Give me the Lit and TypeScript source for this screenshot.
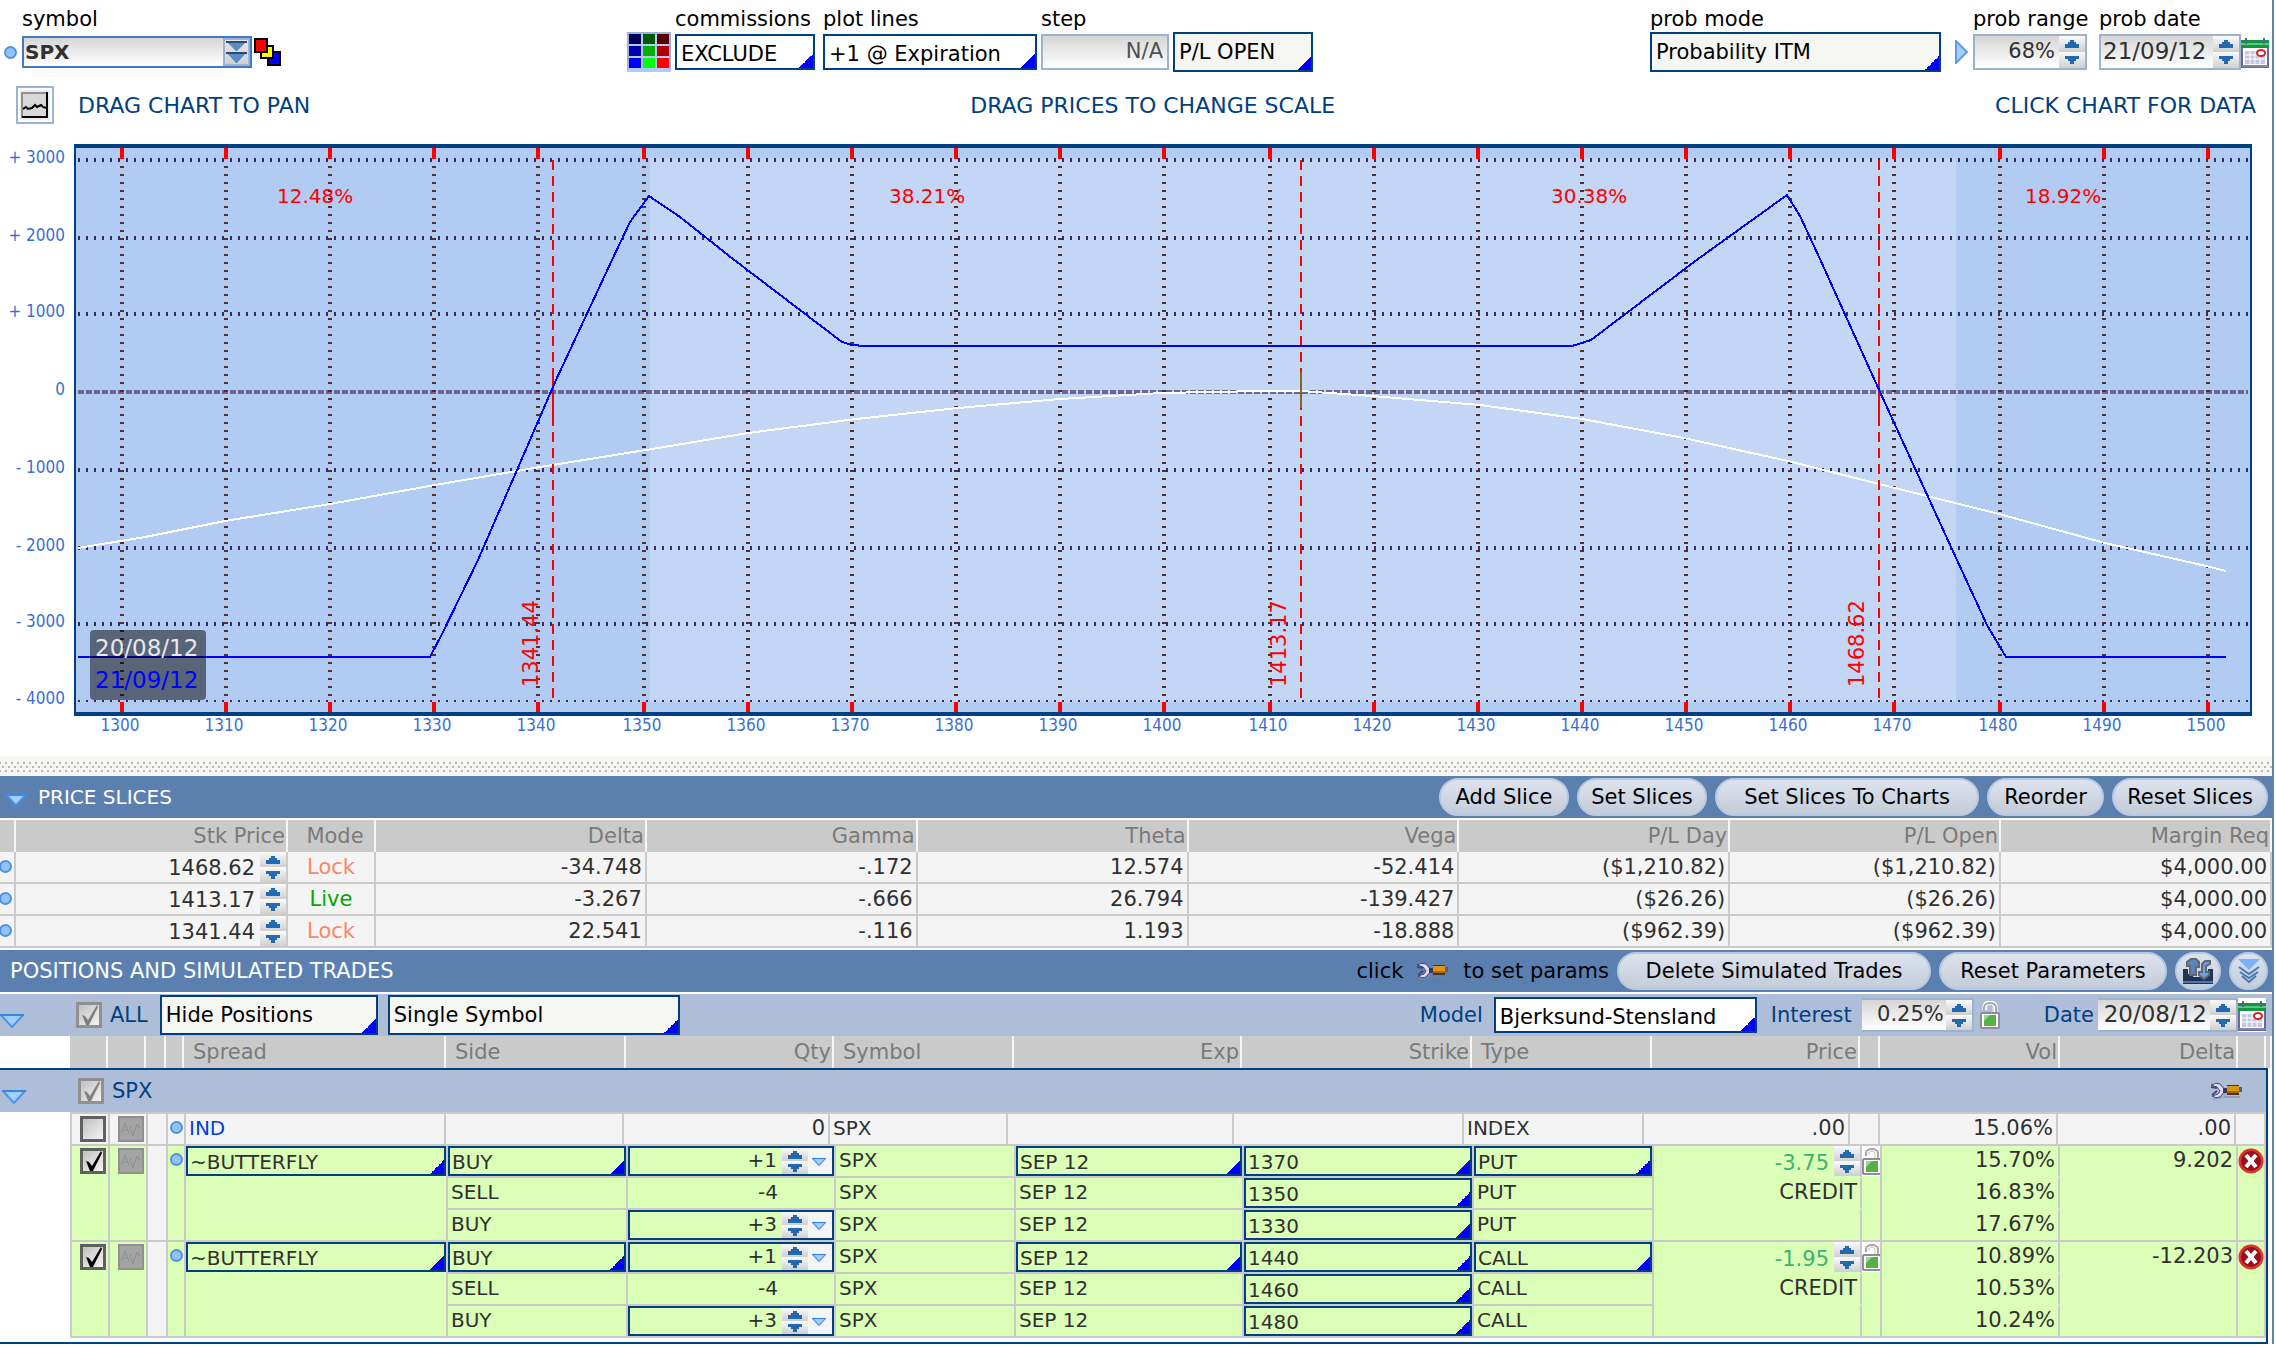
import { LitElement, html, svg, css, nothing } from "lit";
import { customElement } from "lit/decorators.js";

/* ---------- shared styles ---------- */

const shared = css`
  * {
    box-sizing: border-box;
  }
  button,
  input,
  select {
    font: inherit;
    color: inherit;
    margin: 0;
    padding: 0;
    border: 0;
    border-radius: 0;
    background: none;
    appearance: none;
    outline: none;
  }
  svg {
    display: block;
  }
  .pick {
    display: block;
    width: 100%;
    height: 100%;
    padding: 0 16px 0 4px;
    border: 2px solid #004080;
    background: linear-gradient(135deg, transparent 50%, #0000ff 50%) right bottom / 14px 14px no-repeat;
  }
  .spin {
    display: flex;
    flex: none;
    flex-direction: column;
    width: 26px;
    height: 100%;
  }
  .spin button {
    display: flex;
    flex: 1;
    align-items: center;
    justify-content: center;
    background: linear-gradient(#fafafa, #cfcfcf);
  }
  .bead {
    display: block;
    width: 13px;
    height: 13px;
    border: 2px solid #4f93e0;
    border-radius: 50%;
    background: #94c2fb;
  }
`;

/* ---------- icons ---------- */

const spinner = (what: string) => html`<span class="spin">
  <button aria-label="Increase ${what}">
    <svg width="14" height="8" viewBox="0 0 14 8"><path d="M5 0h4v2h2v2h3v4H0V4h3V2h2z" fill="#2468b0" /></svg>
  </button>
  <button aria-label="Decrease ${what}">
    <svg width="14" height="8" viewBox="0 0 14 8"><path d="M0 0h14v3h-3v2H9v3H5V5H3V3H0z" fill="#2468b0" /></svg>
  </button>
</span>`;

const downArrow = (w: number, h: number) => html`<svg width=${w} height=${h} viewBox="0 0 24 14">
  <path d="M1 1h22L12 13z" fill="#9fd0ff" stroke="#4f93e8" stroke-width="2" />
  <path d="M0 1h24" stroke="#3a86e0" stroke-width="2" />
</svg>`;

const calendar = html`<svg width="28" height="34" viewBox="0 0 28 34">
  <rect width="28" height="34" fill="#fff" />
  <path d="M1 10v22h26V10" fill="none" stroke="#68689c" stroke-width="2" />
  <path d="M1 31h26" stroke="#8484b0" stroke-width="2" />
  <rect y="5" width="28" height="8" fill="#109840" />
  <rect y="8" width="28" height="2" fill="#5cc880" />
  <path d="M5 3v6M23 3v6" stroke="#5c5c9c" stroke-width="2" />
  <rect x="4" y="16" width="20" height="13" fill="#c4c8e0" />
  <path d="M4 20h20M4 24h20M9 16v13M14 16v13M19 16v13" stroke="#fff" />
  <ellipse cx="20" cy="18" rx="4" ry="3" fill="#fff" stroke="#d82020" stroke-width="2" />
</svg>`;

const padlock = html`<svg width="20" height="28" viewBox="0 0 20 28">
  <path d="M5 9V5q1-3 5-3t5 3v7" fill="none" stroke="#fff" stroke-width="5" />
  <path d="M4 9V6q1-4 6-4t6 4v7" fill="none" stroke="#a8a8a8" stroke-width="2" />
  <path d="M7 8V6q1-2 3-2t3 2v7" fill="none" stroke="#c0c0c0" />
  <rect x="1" y="12" width="18" height="15" rx="1" fill="#fff" stroke="#8c8c9c" stroke-width="2" />
  <rect x="4" y="14" width="12" height="11" fill="#58b048" />
  <path d="M4 14h6l-6 6z" fill="#9cd890" />
</svg>`;

const wrench = html`<svg width="34" height="20" viewBox="0 0 34 20">
  <path d="M2 5q6-3 10 0l3 4v4l-4 4-8 1" fill="none" stroke="#8890b0" stroke-width="2" opacity="0.5" />
  <path d="M1 4q5-3 9-1l4 5v3l-4 5q-4 2-8-1l6-2 2-3-3-4z" fill="#dcdcf4" stroke="#484878" stroke-width="1" />
  <path d="M1 6l6 1M7 10l-5 4" stroke="#484878" stroke-width="2" />
  <rect x="13" y="7" width="5" height="5" fill="#38385c" />
  <rect x="17" y="4" width="12" height="10" fill="#40342c" />
  <rect x="17" y="5" width="12" height="5" fill="#e09410" />
  <rect x="17" y="10" width="12" height="2" fill="#a86808" />
  <path d="M29 6h3v5h-3z" fill="#605c6c" />
  <path d="M14 16h16" stroke="#788098" stroke-width="2" opacity="0.5" />
</svg>`;

const stacked = html`<svg width="28" height="28" viewBox="0 0 28 28">
  <path d="M14 14h12v13H14z" fill="#00f" stroke="#000" stroke-width="2" />
  <path d="M7 8h12v12H7z" fill="#ff0" stroke="#000" stroke-width="2" />
  <path d="M1 1h12v13H1z" fill="#f00" stroke="#000" stroke-width="2" />
</svg>`;

const swatches = [
  ["#000058", "#005800", "#580000"],
  ["#0000b0", "#00b000", "#b00000"],
  ["#0000ff", "#00ff00", "#ff0000"],
];

const palette = html`<svg width="44" height="40" viewBox="0 0 44 40">
  <rect width="44" height="40" fill="#b1cbf3" />
  <path d="M1 37V1h42v36" fill="none" stroke="#9ab3d6" stroke-width="2" />
  ${swatches.map((row, r) =>
    row.map((c, i) => svg`<rect x=${2 + i * 14} y=${2 + r * 12} width="12" height="10" fill=${c} />`)
  )}
</svg>`;

const cancel = html`<svg width="26" height="26" viewBox="0 0 26 26">
  <ellipse cx="13" cy="13" rx="12.5" ry="12.5" fill="#e03030" />
  <ellipse cx="13" cy="13" rx="10" ry="10" fill="#981018" />
  <path d="M8 7l10 12M18 7L8 19" stroke="#fff" stroke-width="4" />
</svg>`;

/* ---------- payoff chart ---------- */

const TICKS = [122, 226, 330, 434, 538, 644, 748, 852, 956, 1060, 1164, 1270, 1374, 1478, 1582, 1686, 1790, 1894, 2000, 2104, 2208];
const LEVELS: [string, number][] = [
  ["+ 3000", 160], ["+ 2000", 238], ["+ 1000", 314], ["0", 392], ["- 1000", 470], ["- 2000", 548], ["- 3000", 624], ["- 4000", 701],
];
const MARKS: [string, number][] = [["1341.44", 553], ["1413.17", 1301], ["1468.62", 1879]];
const ODDS: [string, number][] = [["12.48%", 277], ["38.21%", 889], ["30.38%", 1551], ["18.92%", 2025]];
const EXPIRY =
  "78,657 430,657 442,634 478,560 556,380 612,260 630,222 649,196 680,217 733,259 842,342 852,345 865,346 1572,346 1591,340 1698,259 1787,195 1800,216 1820,259 1880,392 1957,560 1987,625 2006,657 2226,657";
const TODAY =
  "78,548 145,537 225,521 330,504 435,485 540,467 646,450 748,433 856,419 958,408 1060,399 1161,393 1263,391 1301,391 1372,396 1480,405 1582,419 1684,438 1788,461 1887,486 1999,514 2105,543 2206,566 2226,571";

@customElement("payoff-chart")
export class PayoffChart extends LitElement {
  static styles = css`
    :host {
      display: block;
    }
    svg {
      display: block;
      width: 100%;
      height: auto;
    }
    .axis {
      font: 17px "DejaVu Sans Condensed", "DejaVu Sans", sans-serif;
      fill: #3a6fd0;
    }
    .odds {
      font: 20px "DejaVu Sans", sans-serif;
      fill: #f00;
    }
    .price {
      font: 21px "DejaVu Sans", sans-serif;
      fill: #f00;
    }
    .legend {
      font: 23px "DejaVu Sans", sans-serif;
    }
    .curve {
      fill: none;
      stroke-width: 2;
      shape-rendering: crispEdges;
    }
  `;

  render() {
    return html`<svg viewBox="0 138 2272 602" role="img" aria-label="Profit and loss by price">
      <rect x="74" y="144" width="2178" height="572" fill="#004080" />
      <rect x="76" y="148" width="2174" height="564" fill="#b1cbf3" />
      <rect x="650" y="158" width="1306" height="544" fill="#c4d6f6" />
      ${LEVELS.map(([, y]) =>
        y === 392
          ? svg`<path d="M78 392H2248" stroke="#6d6494" stroke-width="4" stroke-dasharray="6 2" />`
          : svg`<path d="M78 ${y}H2248" stroke="#342c60" stroke-width=${y === 701 ? 2 : 4} stroke-dasharray="2 6" />`
      )}
      ${TICKS.map(
        (x) => svg`<path d="M${x} 166V700" stroke="#503028" stroke-width="4" stroke-dasharray="2 6" />
          <path d="M${x} 148v11M${x} 702v10" stroke="#f00" stroke-width="4" />`
      )}
      <polyline class="curve" points=${TODAY} stroke="#fff" />
      ${MARKS.map(
        ([label, x]) => svg`<path d="M${x} 160V698" stroke="#f00" stroke-width="2" stroke-dasharray="10 6" />
          ${x === 1301
            ? svg`<path d="M1301 372V408" stroke="#806820" stroke-width="2" />`
            : svg`<path d="M${x} 368V425" stroke="#f00" stroke-width="2" />`}
          <text class="price" transform="translate(${x - 15} 687) rotate(-90)">${label}</text>`
      )}
      <polyline class="curve" points=${EXPIRY} stroke="#00f" />
      ${ODDS.map(([label, x]) => svg`<text class="odds" x=${x} y="203">${label}</text>`)}
      ${LEVELS.map(([label, y]) => svg`<text class="axis" x="65" y=${y + 3} text-anchor="end">${label}</text>`)}
      ${TICKS.map((x, i) => svg`<text class="axis" x=${x - 2} y="731" text-anchor="middle">${1300 + i * 10}</text>`)}
      <rect x="90" y="630" width="116" height="70" rx="4" fill="#000" fill-opacity="0.5" />
      <text class="legend" x="95" y="656" fill="#e8e8e8">20/08/12</text>
      <text class="legend" x="95" y="688" fill="#00f">21/09/12</text>
    </svg>`;
  }
}

/* ---------- top controls ---------- */

@customElement("chart-toolbar")
export class ChartToolbar extends LitElement {
  static styles = [
    shared,
    css`
      :host {
        display: block;
      }
      .bar {
        display: flex;
        justify-content: space-between;
        padding: 7px 3px 0 4px;
      }
      .group {
        display: flex;
        align-items: flex-end;
        gap: 4px;
      }
      .group.tight {
        gap: 2px;
      }
      .middle {
        margin-left: 8px;
      }
      .field {
        display: flex;
        flex-direction: column;
      }
      .field label {
        height: 25px;
        line-height: 24px;
        white-space: nowrap;
      }
      .slot {
        display: flex;
        align-items: center;
        height: 40px;
      }
      .w-symbol {
        width: 230px;
      }
      .w-small {
        width: 140px;
      }
      .w-lines {
        width: 214px;
      }
      .w-step {
        width: 128px;
      }
      .w-mode {
        width: 291px;
      }
      .w-range {
        width: 114px;
      }
      .w-date {
        width: 142px;
      }
      .apart {
        margin-right: 4px;
      }
      .apart-more {
        margin-right: 8px;
      }
      .pick {
        background-color: #fff;
      }
      .low {
        height: 36px;
        padding-top: 3px;
      }
      .warm {
        background-color: #f6f6f2;
      }
      .box {
        display: flex;
        align-items: center;
        width: 100%;
        height: 36px;
        border: 2px solid #9cb3d0;
        background: linear-gradient(#d6d6d6, #fff);
        color: #303030;
      }
      .box input {
        flex: 1;
        min-width: 0;
        height: 100%;
        padding: 0 4px;
      }
      .box input.right {
        padding-bottom: 2px;
        text-align: right;
      }
      .box.idle {
        color: #505050;
      }
      .dates {
        font-size: 23px;
      }
      .box.dates input {
        padding: 0 2px 2px;
      }
      .box.symbol {
        height: 32px;
        border-color: #4377c4;
      }
      .box.symbol input {
        padding: 0 1px;
        font-weight: bold;
        font-size: 20px;
      }
      .symbol button {
        width: 27px;
        height: 28px;
        border: 2px solid #9cb3d6;
        background: linear-gradient(#e8e8e8, #d0d0d0);
      }
      .icon {
        display: flex;
        align-items: center;
        height: 40px;
      }
      .dot {
        margin-right: 3px;
      }
      .dated {
        display: flex;
        align-items: flex-end;
      }
    `,
  ];

  render() {
    return html`<div class="bar">
      <div class="group tight">
        <span class="icon dot"><span class="bead"></span></span>
        <div class="field w-symbol">
          <label for="symbol">symbol</label>
          <div class="slot">
            <div class="box symbol">
              <input id="symbol" value="SPX" />
              <button aria-label="Recent symbols">
                <svg width="23" height="24" viewBox="0 0 23 24">
                  <path d="M2 2h19l-9 9h-1zM2 13h19l-9 10h-1z" fill="#5c8cc0" />
                  <path d="M1 2h21M1 13h21" stroke="#284c78" stroke-width="2" />
                </svg>
              </button>
            </div>
          </div>
        </div>
        <button class="icon" aria-label="Link colour">${stacked}</button>
      </div>

      <div class="group middle">
        <button class="icon" aria-label="Colours">${palette}</button>
        <div class="field w-small apart">
          <label for="fees">commissions</label>
          <div class="slot"><select id="fees" class="pick low"><option>EXCLUDE</option></select></div>
        </div>
        <div class="field w-lines">
          <label for="lines">plot lines</label>
          <div class="slot"><select id="lines" class="pick low"><option>+1 @ Expiration</option></select></div>
        </div>
        <div class="field w-step">
          <label for="step">step</label>
          <div class="slot"><div class="box idle"><input id="step" class="right" value="N/A" /></div></div>
        </div>
        <div class="field w-small">
          <div class="slot"><select class="pick warm" aria-label="Plot"><option>P/L OPEN</option></select></div>
        </div>
      </div>

      <div class="group">
        <div class="field w-mode apart-more">
          <label for="mode">prob mode</label>
          <div class="slot"><select id="mode" class="pick warm"><option>Probability ITM</option></select></div>
        </div>
        <button class="icon" aria-label="More">
          <svg width="16" height="24" viewBox="0 0 16 24">
            <path d="M3 1v22L14 12z" fill="#a4d0ff" stroke="#5c9cf0" stroke-width="2" />
          </svg>
        </button>
        <div class="field w-range apart-more">
          <label for="range">prob range</label>
          <div class="slot"><div class="box"><input id="range" class="right" value="68%" />${spinner("range")}</div></div>
        </div>
        <div class="dated">
          <div class="field w-date">
            <label for="date">prob date</label>
            <div class="slot"><div class="box dates"><input id="date" value="21/09/12" />${spinner("date")}</div></div>
          </div>
          <button class="icon" aria-label="Calendar">${calendar}</button>
        </div>
      </div>
    </div>`;
  }
}

/* ---------- price slices ---------- */

const SLICES = [
  ["1468.62", "Lock", "-34.748", "-.172", "12.574", "-52.414", "($1,210.82)", "($1,210.82)", "$4,000.00"],
  ["1413.17", "Live", "-3.267", "-.666", "26.794", "-139.427", "($26.26)", "($26.26)", "$4,000.00"],
  ["1341.44", "Lock", "22.541", "-.116", "1.193", "-18.888", "($962.39)", "($962.39)", "$4,000.00"],
];

const barStyles = css`
  .bar {
    display: flex;
    align-items: center;
    gap: 8px;
    height: 42px;
    padding-right: 4px;
    background: #5b80b0;
    color: #fff;
  }
  .bar h2 {
    flex: 1;
    margin: 0;
    font-size: 20px;
    font-weight: normal;
  }
  .pill {
    display: flex;
    align-items: center;
    justify-content: center;
    height: 38px;
    border: 2px solid #b8c8e0;
    border-radius: 19px;
    background: linear-gradient(#dde3ee, #c4ccd9);
    color: #000;
    white-space: nowrap;
  }
  table {
    width: 100%;
    border-collapse: separate;
    border-spacing: 0;
    table-layout: fixed;
  }
  th {
    height: 32px;
    padding: 0 1px 0 8px;
    border-right: 2px solid #f6f6f6;
    background: #cacaca;
    color: #7a7a7a;
    font-weight: normal;
    line-height: 32px;
    text-align: right;
  }
  td {
    height: 32px;
    border-right: 2px solid #cacaca;
    border-bottom: 2px solid #cacaca;
    color: #303030;
    line-height: 28px;
    vertical-align: top;
  }
`;

@customElement("price-slices")
export class PriceSlices extends LitElement {
  static styles = [
    shared,
    barStyles,
    css`
      :host {
        display: block;
      }
      .bar {
        margin-bottom: 2px;
      }
      .fold {
        width: 30px;
        margin-top: 6px;
        padding-left: 5px;
      }
      .bar .p130 {
        width: 130px;
      }
      .bar .p117 {
        width: 117px;
      }
      .bar .p158 {
        width: 156px;
      }
      .bar .p264 {
        width: 264px;
      }
      .c-dot {
        width: 16px;
      }
      .c-price {
        width: 272px;
      }
      .c-mode {
        width: 88px;
      }
      td {
        padding: 0 3px 0 0;
        background: #f4f4f4;
        line-height: 30px;
        text-align: right;
      }
      td.flush {
        padding: 0;
      }
      .edit {
        display: flex;
        height: 30px;
      }
      .edit input {
        flex: 1;
        min-width: 0;
        padding: 2px 5px 0 0;
        text-align: right;
      }
      .bead {
        margin: 8px 0 0 -1px;
      }
      .mid {
        padding: 0;
        text-align: center;
      }
      th.mid {
        padding-left: 8px;
      }
      .Lock {
        color: #f88868;
      }
      .Live {
        color: #00a800;
      }
    `,
  ];

  render() {
    return html`<header class="bar">
        <button class="fold" aria-label="Collapse">${downArrow(22, 12)}</button>
        <h2>PRICE SLICES</h2>
        <button class="pill p130">Add Slice</button>
        <button class="pill p130">Set Slices</button>
        <button class="pill p264">Set Slices To Charts</button>
        <button class="pill p117">Reorder</button>
        <button class="pill p158">Reset Slices</button>
      </header>
      <table>
        <colgroup>
          <col class="c-dot" /><col class="c-price" /><col class="c-mode" />
          ${Array.from({ length: 7 }, () => html`<col />`)}
        </colgroup>
        <thead>
          <tr>
            <th></th><th>Stk Price</th><th class="mid">Mode</th><th>Delta</th><th>Gamma</th><th>Theta</th>
            <th>Vega</th><th>P/L Day</th><th>P/L Open</th><th>Margin Req</th>
          </tr>
        </thead>
        <tbody>
          ${SLICES.map(
            ([price, mode, ...rest]) => html`<tr>
              <td class="flush"><span class="bead"></span></td>
              <td class="flush">
                <div class="edit"><input aria-label="Stock price" value=${price} />${spinner("price")}</div>
              </td>
              <td class="mid ${mode}">${mode}</td>
              ${rest.map((v) => html`<td>${v}</td>`)}
            </tr>`
          )}
        </tbody>
      </table>`;
  }
}

/* ---------- positions ---------- */

const HEAD_COLS = [70, 38, 38, 20, 18, 262, 180, 208, 180, 228, 230, 180, 208, 20, 180, 178, 28, 6];
const IND_COLS = [38, 38, 20, 18, 260, 178, 206, 178, 226, 230, 180, 206, 30, 178, 178, 30];
const LEG_COLS = [38, 38, 20, 18, 262, 180, 208, 180, 228, 230, 180, 208, 20, 178, 178, 28];

interface Leg {
  side: string;
  qty: string;
  strike: string;
  vol: string;
}
interface Trade {
  type: string;
  price: string;
  delta: string;
  legs: Leg[];
}

const TRADES: Trade[] = [
  {
    type: "PUT",
    price: "-3.75",
    delta: "9.202",
    legs: [
      { side: "BUY", qty: "+1", strike: "1370", vol: "15.70%" },
      { side: "SELL", qty: "-4", strike: "1350", vol: "16.83%" },
      { side: "BUY", qty: "+3", strike: "1330", vol: "17.67%" },
    ],
  },
  {
    type: "CALL",
    price: "-1.95",
    delta: "-12.203",
    legs: [
      { side: "BUY", qty: "+1", strike: "1440", vol: "10.89%" },
      { side: "SELL", qty: "-4", strike: "1460", vol: "10.53%" },
      { side: "BUY", qty: "+3", strike: "1480", vol: "10.24%" },
    ],
  },
];

const cols = (widths: number[]) => html`<colgroup>${widths.map((w) => html`<col width=${w} />`)}</colgroup>`;

const tick = (checked: boolean, label: string, dim = false, id?: string) => html`<span class="tick ${dim ? "dim" : ""}">
  ${id
    ? html`<input type="checkbox" id=${id} .checked=${checked} />`
    : html`<input type="checkbox" .checked=${checked} aria-label=${label} />`}
  ${checked
    ? html`<svg class="mark" width="22" height="22" viewBox="0 0 22 22"><path d="M4 11l3 1 3 4L19 1l1 2-9 18H8z" fill="currentColor" /></svg>`
    : nothing}
</span>`;

const average = html`<button class="avg" aria-label="Average" disabled>
  <svg width="22" height="22" viewBox="0 0 22 22">
    <path d="M1 15L5 5l4 10M2 12h6M10 8l3 10 4-12 3 5" fill="none" stroke="#909090" stroke-width="1" />
  </svg>
</button>`;

const choose = (label: string, value: string) =>
  html`<select class="pick" aria-label=${label}><option>${value}</option></select>`;

@customElement("positions-panel")
export class PositionsPanel extends LitElement {
  static styles = [
    shared,
    barStyles,
    css`
      :host {
        display: block;
        margin-top: 2px;
      }
      .bar h2 {
        padding-left: 10px;
        font-size: 21px;
      }
      .hint {
        display: flex;
        align-items: center;
        gap: 13px;
        color: #000;
      }
      .p314 {
        width: 314px;
      }
      .p228 {
        width: 228px;
      }
      .p46 {
        width: 46px;
      }
      .p39 {
        width: 39px;
      }
      .filter {
        display: flex;
        align-items: center;
        height: 42px;
        margin-top: 2px;
        padding-right: 6px;
        background: #aebed9;
        color: #004080;
      }
      .filter .pick {
        flex: none;
        height: 40px;
        background-color: #f6f6f2;
        color: #000;
      }
      .filter .hide {
        width: 218px;
        margin: 0 10px 0 12px;
      }
      .filter .single {
        width: 292px;
      }
      .filter .model {
        width: 263px;
        height: 36px;
        margin: 0 14px 0 11px;
        padding-top: 3px;
        background-color: #fff;
      }
      .filter .push {
        margin-left: auto;
      }
      .num {
        display: flex;
        height: 34px;
        margin-left: 10px;
        background: linear-gradient(#d6d6d6, #fff);
        border: 2px solid #9cb3d0;
        border-left-width: 0;
        color: #303030;
      }
      .num input {
        width: 84px;
        padding-right: 2px;
        padding-bottom: 2px;
        text-align: right;
      }
      .num.day {
        margin-left: 4px;
        font-size: 23px;
      }
      .num.day input {
        width: 112px;
        padding-right: 3px;
      }
      .lock {
        margin: 0 44px 0 6px;
      }
      .fold {
        flex: none;
        width: 76px;
        padding-top: 12px;
      }
      .tick {
        display: grid;
        flex: none;
        width: 26px;
        height: 26px;
        color: #000;
      }
      .tick > * {
        grid-area: 1 / 1;
        place-self: center;
      }
      .tick input {
        width: 26px;
        height: 26px;
        border: 3px solid #606060;
        background: linear-gradient(135deg, #c0c0c0, #f4f4f4);
      }
      .tick.dim {
        color: #808080;
      }
      .tick.dim input {
        border-color: #909090;
      }
      .mark {
        pointer-events: none;
      }
      .filter .name,
      .group .name {
        margin-left: 8px;
      }
      th.start {
        padding-left: 9px;
        text-align: left;
      }
      th.blank {
        border: 0;
        background: #fff;
      }
      .box {
        margin-right: 4px;
        border: 2px solid #004080;
        border-left: 0;
      }
      .group {
        display: flex;
        align-items: center;
        height: 42px;
        padding: 0 22px 0 2px;
        background: #aebed9;
        color: #004080;
      }
      .group .push {
        margin-left: auto;
      }
      .rows {
        padding-left: 70px;
      }
      .rows table {
        border-left: 2px solid #cacaca;
      }
      .rows .first {
        border-top: 2px solid #cacaca;
      }
      .rows td {
        padding: 0 3px;
        font-size: 20px;
      }
      .ind td {
        background: #f4f4f4;
      }
      .legs td {
        background: #dbffb7;
      }
      .legs td.off {
        background: #f4f4f4;
      }
      .rows td.full {
        padding: 0;
      }
      .rows td.end {
        text-align: right;
        font-size: 21px;
      }
      .rows td.qty {
        padding-right: 56px;
        text-align: right;
      }
      .rows td.open {
        border-bottom-color: transparent;
        background-clip: border-box;
      }
      .rows td .pick,
      .rows td .edit {
        height: 30px;
      }
      .rows td .pick {
        padding-bottom: 2px;
        padding-left: 2px;
        color: #303030;
      }
      .edit {
        display: flex;
        align-items: stretch;
      }
      .edit.framed {
        border: 2px solid #004080;
      }
      .edit input {
        flex: 1;
        min-width: 0;
        padding-right: 5px;
        text-align: right;
      }
      .edit.framed input {
        padding-bottom: 2px;
      }
      .edit .drop {
        width: 24px;
        padding: 2px 0 0 4px;
        background: #f4f4f4;
      }
      .edit.green {
        color: #3cb371;
        font-size: 21px;
      }
      .edit.green input {
        padding-top: 3px;
      }
      .link {
        color: #0040e0;
        text-decoration: none;
      }
      .rows .tick {
        margin: 2px 0 0 8px;
      }
      .avg {
        display: flex;
        align-items: center;
        width: 26px;
        height: 26px;
        margin: 2px 0 0 8px;
        border: 2px solid #909090;
        background: #a4a4a4;
      }
      .bead {
        margin: 7px 0 0 2px;
      }
      .key {
        width: 18px;
        height: 30px;
        overflow: hidden;
        background: #fff;
      }
      .cancel {
        display: block;
        margin-top: 2px;
      }
      .tail {
        height: 4px;
        background: #fff;
      }
    `,
  ];

  private legRow(trade: Trade, leg: Leg, i: number) {
    const head = i === 0;
    return html`<tr>
      ${head
        ? html`<td class="full" rowspan="3">${tick(true, "Include trade")}</td>
            <td class="full" rowspan="3">${average}</td>
            <td class="off" rowspan="3"></td>
            <td class="full" rowspan="3"><span class="bead"></span></td>
            <td class="full" rowspan="3">${choose("Spread", "~BUTTERFLY")}</td>`
        : nothing}
      ${head ? html`<td class="full">${choose("Side", leg.side)}</td>` : html`<td>${leg.side}</td>`}
      ${leg.side === "BUY"
        ? html`<td class="full">
            <div class="edit framed">
              <input aria-label="Quantity" value=${leg.qty} />${spinner("quantity")}
              <button class="drop" aria-label="Quantity list">${downArrow(14, 14)}</button>
            </div>
          </td>`
        : html`<td class="qty">${leg.qty}</td>`}
      <td>SPX</td>
      ${head ? html`<td class="full">${choose("Expiration", "SEP 12")}</td>` : html`<td>SEP 12</td>`}
      <td class="full">${choose("Strike", leg.strike)}</td>
      ${head ? html`<td class="full">${choose("Type", trade.type)}</td>` : html`<td>${trade.type}</td>`}
      ${i === 0
        ? html`<td class="full open">
            <div class="edit green"><input aria-label="Price" value=${trade.price} />${spinner("price")}</div>
          </td>`
        : i === 1
          ? html`<td class="end open">CREDIT</td>`
          : html`<td></td>`}
      ${head
        ? html`<td class="full" rowspan="3"><button class="key" aria-label="Lock price">${padlock}</button></td>`
        : nothing}
      <td class="end ${i < 2 ? "open" : ""}">${leg.vol}</td>
      ${head
        ? html`<td class="end" rowspan="3">${trade.delta}</td>
            <td class="full" rowspan="3"><button class="cancel" aria-label="Delete trade">${cancel}</button></td>`
        : nothing}
    </tr>`;
  }

  render() {
    return html`<header class="bar">
        <h2>POSITIONS AND SIMULATED TRADES</h2>
        <span class="hint">click ${wrench} to set params</span>
        <button class="pill p314">Delete Simulated Trades</button>
        <button class="pill p228">Reset Parameters</button>
        <button class="pill p46" aria-label="Import and export">
          <svg width="32" height="28" viewBox="0 0 32 28">
            <path d="M1 12h5v5h5v3h12v-3h3v-5h5v15H1z" fill="#1c3458" />
            <path d="M1 25h30" stroke="#5078b0" stroke-width="2" />
            <path d="M8 17V9H5V5l4-3h5l3 3v5h-3v8H8z" fill="#5c84bc" stroke="#606870" stroke-width="2" />
            <path d="M28 4h-5l-3 3v8h-3v3l5 4 5-4v-3h-3V9l4-2z" fill="#6ca0e8" stroke="#606870" stroke-width="2" />
          </svg>
        </button>
        <button class="pill p39" aria-label="Expand">
          <svg width="24" height="26" viewBox="0 0 24 26">
            <path d="M1 1h22L12 12z" fill="#7cb0f8" />
            <path d="M2 9l10 7 10-7M3 14l9 6 9-6M5 18l7 6 7-6" fill="none" stroke="#4878b8" stroke-width="2" />
          </svg>
        </button>
      </header>

      <div class="filter">
        <button class="fold" aria-label="Collapse all">${downArrow(24, 14)}</button>
        ${tick(true, "All", true, "all")}
        <label class="name" for="all">ALL</label>
        <select class="pick hide" aria-label="Positions shown"><option>Hide Positions</option></select>
        <select class="pick single" aria-label="Symbols shown"><option>Single Symbol</option></select>
        <label class="push" for="model">Model</label>
        <select id="model" class="pick model"><option>Bjerksund-Stensland</option></select>
        <label for="interest">Interest</label>
        <div class="num"><input id="interest" value="0.25%" />${spinner("interest")}</div>
        <button class="lock" aria-label="Lock interest">${padlock}</button>
        <label for="day">Date</label>
        <div class="num day"><input id="day" value="20/08/12" />${spinner("date")}</div>
        <button aria-label="Calendar">${calendar}</button>
      </div>

      <table>
        ${cols(HEAD_COLS)}
        <thead>
          <tr>
            <th class="blank"></th><th></th><th></th><th></th><th></th>
            <th class="start">Spread</th><th class="start">Side</th><th>Qty</th><th class="start">Symbol</th>
            <th>Exp</th><th>Strike</th><th class="start">Type</th><th>Price</th><th></th><th>Vol</th><th>Delta</th>
            <th></th><th></th>
          </tr>
        </thead>
      </table>

      <div class="box">
        <div class="group">
          <button class="fold" aria-label="Collapse SPX">${downArrow(24, 14)}</button>
          ${tick(true, "SPX", true, "spx")}
          <label class="name" for="spx">SPX</label>
          <button class="push" aria-label="Set SPX parameters">${wrench}</button>
        </div>
        <div class="rows">
          <table class="ind first">
            ${cols(IND_COLS)}
            <tbody>
              <tr>
                <td class="full">${tick(false, "Include index")}</td>
                <td class="full">${average}</td>
                <td></td>
                <td class="full"><span class="bead"></span></td>
                <td><a class="link" href="#ind">IND</a></td>
                <td></td>
                <td class="end">0</td>
                <td>SPX</td>
                <td></td>
                <td></td>
                <td>INDEX</td>
                <td class="end">.00</td>
                <td></td>
                <td class="end">15.06%</td>
                <td class="end">.00</td>
                <td></td>
              </tr>
            </tbody>
          </table>
          <table class="legs">
            ${cols(LEG_COLS)}
            <tbody>
              ${TRADES.map((t) => t.legs.map((l, i) => this.legRow(t, l, i)))}
            </tbody>
          </table>
        </div>
        <div class="tail"></div>
      </div>`;
  }
}

/* ---------- page ---------- */

@customElement("app-root")
export class AppRoot extends LitElement {
  static styles = [
    shared,
    css`
      :host {
        display: block;
        margin-right: 2px;
        border-right: 2px solid #6083b8;
        background: #fff;
        color: #000;
        font: 21px "DejaVu Sans", sans-serif;
      }
      .hints {
        display: flex;
        align-items: center;
        justify-content: space-between;
        height: 66px;
        padding: 0 16px;
        color: #004080;
        font-size: 22px;
      }
      .pan {
        display: flex;
        align-items: center;
        gap: 24px;
      }
      .thumb {
        padding: 2px;
        border: 2px solid #9cb3d6;
        background: #fff;
      }
      .splitter {
        height: 20px;
        margin-top: 16px;
        background:
          radial-gradient(circle at 1px 1px, #b8b8b0 1px, transparent 1px) 2px 6px / 6px 8px repeat,
          radial-gradient(circle at 1px 1px, #b8b8b0 1px, transparent 1px) 5px 2px / 6px 8px repeat,
          #f6f6f2;
        border-top: 4px solid #f6f6f2;
        border-bottom: 4px solid #f6f6f2;
      }
    `,
  ];

  render() {
    return html`<chart-toolbar></chart-toolbar>
      <div class="hints">
        <div class="pan">
          <button class="thumb" aria-label="Chart thumbnail">
            <svg width="30" height="30" viewBox="0 0 30 30">
              <rect width="30" height="30" fill="#ececec" />
              <rect x="2" y="2" width="26" height="26" fill="#d8d8d8" />
              <path d="M2 28V3h25" fill="none" stroke="#909090" stroke-width="2" />
              <path d="M27 2v25H2" fill="none" stroke="#000" stroke-width="2" />
              <path d="M3 19l3-2 2 2 4-1 3-3 2 2 4-2 2 2 3 1" fill="none" stroke="#000" stroke-width="2" />
            </svg>
          </button>
          <span>DRAG CHART TO PAN</span>
        </div>
        <span>DRAG PRICES TO CHANGE SCALE</span>
        <span>CLICK CHART FOR DATA</span>
      </div>
      <payoff-chart></payoff-chart>
      <div class="splitter"></div>
      <price-slices></price-slices>
      <positions-panel></positions-panel>`;
  }
}
